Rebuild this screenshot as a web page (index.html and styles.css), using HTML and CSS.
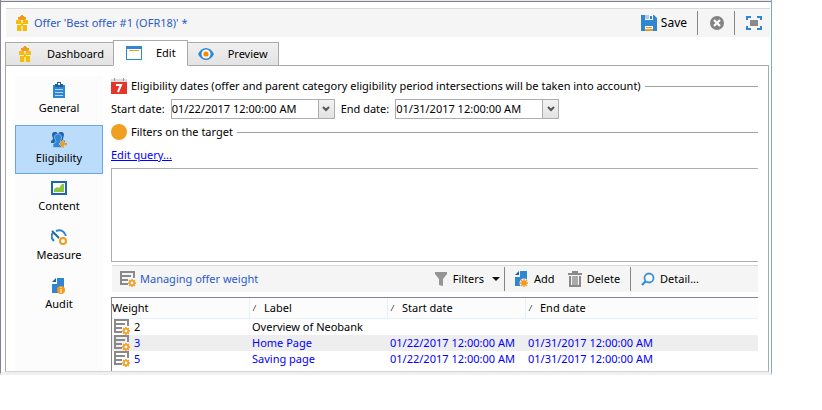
FILE: index.html
```html
<!DOCTYPE html>
<html lang="en">
<head>
<meta charset="utf-8">
<title>Offer 'Best offer #1 (OFR18)'</title>
<link rel="stylesheet" href="styles.css">
</head>
<body>
<svg class="defs" aria-hidden="true">
  <symbol id="gift" viewBox="0 0 16 16">
    <path fill="#f29a1c" d="M4 4V2h2V1h1V0h2v1h1v1h2v2l-1 1H5z"/>
    <path fill="#f2bd0c" d="M2 5h5v4H2zM9 5h5v4H9zM3 10h4v6H3zM9 10h4v6H9z"/>
    <path fill="#f9e08a" d="M7 6h2v3H7zM7 10h2v6H7z"/>
    <path fill="#f2bd0c" d="M7 8h2v3H7z"/>
  </symbol>
  <symbol id="gear" viewBox="0 0 16 16">
    <path stroke="#f29a1c" stroke-width="3" d="M8 0v16M0 8h16M2.300 2.300l11.400 11.400M13.700 2.300L2.300 13.700"/>
    <circle cx="8" cy="8" r="4.200" fill="#fff" stroke="#f29a1c" stroke-width="2.600"/>
  </symbol>
  <symbol id="listgear" viewBox="0 0 16 16">
    <path fill="none" stroke="#8a8a8a" stroke-width="2" d="M8 13H1V1h13v6"/>
    <path stroke="#8a8a8a" stroke-width="2" d="M1 5h10M1 9h7"/>
    <use href="#gear" x="8" y="8" width="8" height="8"/>
  </symbol>
  <symbol id="sort" viewBox="0 0 6 6">
    <path d="M1 6l3-6" stroke="#666"/>
  </symbol>
</svg>
<div class="window">
  <header class="bar title-bar">
    <svg class="icon"><use href="#gift"/></svg>
    <h1 class="caption">Offer 'Best offer #1 (OFR18)' *</h1>
    <button class="tool" type="button">
      <svg class="icon" viewBox="0 0 16 16"><path fill="#2f86d2" d="M0 0h13l3 3v13h-4v-5H4v5H0z"/><path fill="#fff" d="M4 0h8v5H4z"/><path fill="#a9cdec" d="M4 0h4v4H4z"/><path fill="#2f86d2" d="M9 1h2v3H9z"/><path fill="#fff" d="M4 11h8v5H4z"/><path fill="#f29a1c" d="M5 12h6v1H5zM4 14h8v2H4z"/></svg>
      <span>Save</span>
    </button>
    <button class="tool framed" type="button" aria-label="Cancel">
      <svg class="icon" viewBox="0 0 16 16"><circle cx="8" cy="8" r="7" fill="#848484"/><path d="M5 5l6 6M11 5l-6 6" stroke="#fff" stroke-width="2.2"/></svg>
    </button>
    <button class="tool" type="button" aria-label="Full screen">
      <svg class="icon" viewBox="0 0 16 16"><path d="M5 2H1v3M11 2h4v3M1 11v3h4M15 11v3h-4" fill="none" stroke="#2f86d2" stroke-width="2"/><path fill="#8a8a8a" d="M4 5h8v6H4z"/></svg>
    </button>
  </header>

  <nav class="tabs">
    <button class="tab" type="button"><svg class="icon"><use href="#gift"/></svg>Dashboard</button>
    <button class="tab current" type="button"><svg class="icon" viewBox="0 0 16 16"><path fill="#2f86d2" d="M0 1h16v14H0z"/><path fill="#fff" d="M1 4h14v10H1z"/><path fill="#f29a1c" d="M3 5h10v1H3z"/></svg>Edit</button>
    <button class="tab" type="button"><svg class="icon" viewBox="0 0 16 16"><path fill="#2f86d2" d="M0 8C2 4 5 2 8 2s6 2 8 6c-2 4-5 6-8 6S2 12 0 8z"/><circle cx="8" cy="8" r="4.500" fill="#fff"/><circle cx="8" cy="8" r="2.600" fill="#f08c00"/></svg>Preview</button>
  </nav>

  <div class="panel">
    <nav class="side">
      <button class="side-item" type="button"><svg class="icon" viewBox="0 0 16 16"><path fill="#2f86d2" d="M2 3h12v13H2z"/><path fill="#1f5f9f" d="M4 2h2V0h4v2h2v3H4z"/><path fill="#fff" d="M7 1h2v2H7z"/><path stroke="#b5d6f2" d="M4 7.500h8M4 10.500h8M4 13.500h8"/></svg>General</button>
      <button class="side-item current" type="button"><svg class="icon" viewBox="0 0 16 16"><path fill="#1f66ad" d="M1 3c0-4 5-4 6-1v6l-2 3H0V9l2-2zM13 3c0-4-5-4-6-1v6l2 3h5V9l-2-2z"/><path fill="#2f86d2" stroke="#bcdcfb" stroke-width=".6" d="M3.500 5c0-4 7-4 7 0 0 3-1 3-1 5l3 2v3.500H2V12l3-2C5 8 3.500 8 3.500 5z"/><path fill="#f29a1c" stroke="#bcdcfb" stroke-width=".6" d="M8 12l5-5v3.500h3.500v3H13V17z"/></svg>Eligibility</button>
      <button class="side-item" type="button"><svg class="icon" viewBox="0 0 16 16"><path fill="#fff" stroke="#1f66ad" stroke-width="2" d="M1 2h14v12H1z"/><path fill="#8cc63e" d="M3 12V9l3-2 2 1 3-4h2v8z"/></svg>Content</button>
      <button class="side-item" type="button"><svg class="icon" viewBox="0 0 16 16"><path fill="none" stroke="#2f86d2" stroke-width="2" d="M3 12C0 9 0 6 2 4M5 2c5-2 8 0 10 5"/><path stroke="#1f66ad" stroke-width="2" d="M1 2l7 7"/><circle cx="12" cy="12" r="3" fill="#fff" stroke="#f29a1c" stroke-width="2"/></svg>Measure</button>
      <button class="side-item" type="button"><svg class="icon" viewBox="0 0 16 16"><path fill="#2f86d2" d="M6 0h7v15H1V6h5z"/><path fill="#1f5f9f" d="M1 4l4-4v4z"/><circle cx="10" cy="12" r="4" fill="#f29a1c"/><path fill="#fff" d="M9.500 9h1v1h-1zM9.500 11h1v4h-1z"/></svg>Audit</button>
    </nav>

    <main class="content">
      <h2 class="section">
        <svg class="icon" viewBox="0 0 16 16"><path fill="#ddd" d="M0 1h16v4H0z"/><path fill="#999" d="M3 0h1v3H3zM12 0h1v3h-1z"/><path fill="#e2352c" d="M0 4h16v12H0z"/><path fill="none" stroke="#fff" stroke-width="2" d="M5 7h5l-3 7"/></svg>
        Eligibility dates (offer and parent category eligibility period intersections will be taken into account)
      </h2>
      <div class="dates">
        <label for="start">Start date:</label>
        <span class="combo"><input id="start" value="01/22/2017 12:00:00 AM"><button type="button" aria-label="Pick start date"><svg viewBox="0 0 8 8"><path d="M1 2l3 3 3-3" fill="none" stroke="#555" stroke-width="2"/></svg></button></span>
        <label for="end">End date:</label>
        <span class="combo"><input id="end" value="01/31/2017 12:00:00 AM"><button type="button" aria-label="Pick end date"><svg viewBox="0 0 8 8"><path d="M1 2l3 3 3-3" fill="none" stroke="#555" stroke-width="2"/></svg></button></span>
      </div>
      <h2 class="section">
        <svg class="icon" viewBox="0 0 16 16"><circle cx="8" cy="8" r="8" fill="#f0a020"/></svg>
        Filters on the target
      </h2>
      <a class="query-link" href="#">Edit query...</a>
      <textarea class="query" aria-label="Query" readonly></textarea>

      <div class="bar list-bar">
        <svg class="icon"><use href="#listgear"/></svg>
        <h2 class="caption">Managing offer weight</h2>
        <button class="tool" type="button">
          <svg class="icon" viewBox="0 0 16 16"><path fill="#959595" d="M2 1h12v2l-4 5v7l-4-1V8L2 3z"/></svg><span>Filters</span>
          <svg class="arrow" viewBox="0 0 8 4"><path d="M0 0h8L4 4z" fill="#111"/></svg>
        </button>
        <button class="tool first" type="button">
          <svg class="icon" viewBox="0 0 16 16"><path fill="#2f86d2" d="M6 0h7v15H1V6h5z"/><path fill="#1f5f9f" d="M1 4l4-4v4z"/><circle cx="10" cy="12" r="4.500" fill="#f5f5f5"/><circle cx="10" cy="12" r="2.600" fill="#f29a1c"/><path stroke="#f29a1c" stroke-width="1.300" d="M10 8v8M6 12h8M7 9l6 6M13 9l-6 6"/></svg><span>Add</span>
        </button>
        <button class="tool" type="button">
          <svg class="icon" viewBox="0 0 16 16"><path fill="none" stroke="#8a8a8a" stroke-width="2" d="M1 3h14M6 3V1h4v2M3 5v10h10V5"/><path stroke="#8a8a8a" stroke-width="1.400" d="M6 5v9M8 5v9M10 5v9"/></svg><span>Delete</span>
        </button>
        <button class="tool last" type="button">
          <svg class="icon" viewBox="0 0 16 16"><circle cx="9" cy="7" r="4.500" fill="#fff" stroke="#3b8fd8" stroke-width="1.800"/><path d="M6 10l-4 4" stroke="#3b8fd8" stroke-width="2.400"/></svg><span>Detail...</span>
        </button>
      </div>

      <div class="list">
        <table>
          <thead>
            <tr><th>Weight</th><th><svg class="sort"><use href="#sort"/></svg>Label</th><th><svg class="sort"><use href="#sort"/></svg>Start date</th><th><svg class="sort"><use href="#sort"/></svg>End date</th></tr>
          </thead>
          <tbody>
            <tr><td><span class="weight"><svg class="icon"><use href="#listgear"/></svg>2</span></td><td>Overview of Neobank</td><td></td><td></td></tr>
            <tr class="link shaded"><td><span class="weight"><svg class="icon"><use href="#listgear"/></svg>3</span></td><td>Home Page</td><td>01/22/2017 12:00:00 AM</td><td>01/31/2017 12:00:00 AM</td></tr>
            <tr class="link"><td><span class="weight"><svg class="icon"><use href="#listgear"/></svg>5</span></td><td>Saving page</td><td>01/22/2017 12:00:00 AM</td><td>01/31/2017 12:00:00 AM</td></tr>
          </tbody>
        </table>
      </div>
    </main>
  </div>
</div>
</body>
</html>
```

FILE: styles.css
```css
* { box-sizing: border-box; }

body {
  margin: 0;
  background: #fff;
  color: #000;
  font: 11px/16px "Noto Sans", "Open Sans", sans-serif;
}

button, input, textarea {
  margin: 0;
  padding: 0;
  border: 0;
  background: none;
  color: inherit;
  font: inherit;
}

h1, h2 { margin: 0; font: inherit; }

.defs { position: absolute; width: 0; height: 0; }

.icon { display: block; flex: none; width: 16px; height: 16px; }

.window {
  display: flex;
  flex-direction: column;
  margin-right: 50px;
  border-left: 1px solid #838391;
  border-right: 1px solid #7aa7cc;
  border-bottom: 3px solid #f0f0f0;
}

.window::before {
  content: "";
  height: 1px;
  background: #e8e8e8;
  border-bottom: 1px solid #7f7f8b;
}

.bar {
  display: flex;
  align-items: center;
  background: #f5f5f5;
  border-top: 1px solid #d9d9d9;
  white-space: nowrap;
}

.title-bar { height: 29px; margin: 6px 1px 0 5px; padding: 0 8px; }

.caption { flex: 1; margin-left: 4px; color: #2a5bc8; }

.title-bar .caption, .title-bar .tool { font-size: 12px; }

.title-bar .caption { font-size: 11px; }

.tool {
  display: flex;
  align-items: center;
  gap: 4px;
  height: 24px;
}

.framed {
  margin: 0 11px 0 10px;
  padding: 0 9px 0 11px;
  border: solid #858585;
  border-width: 0 1px;
}

.tabs {
  display: flex;
  align-items: flex-end;
  height: 26px;
  margin: 3px 0 0 4px;
  position: relative;
}

.tab {
  display: flex;
  align-items: center;
  gap: 14px;
  height: 24px;
  padding: 0 9px 0 11px;
  border: 1px solid #a9a9a9;
  background: linear-gradient(#f0f0f0, #e3e3e3);
}

.tab + .tab { margin-left: -1px; padding: 0 10px; }

.tab.current {
  height: 26px;
  padding: 0 11px 0 12px;
  border-bottom-color: #fff;
  background: #fff;
  z-index: 1;
}

.panel {
  display: flex;
  gap: 8px;
  margin: -1px 2px 0 4px;
  padding: 10px 10px 0 9px;
  border: 1px solid #a9a9a9;
  border-bottom-color: #d4d4d4;
}

.side { flex: none; width: 88px; background: #fcfcfc; }

.side-item {
  display: flex;
  flex-direction: column;
  align-items: center;
  gap: 2px;
  width: 100%;
  height: 49px;
  padding-top: 6px;
}

.side-item.current { border: 1px solid #66a7e8; background: #bcdcfb; }

.content { flex: 1; min-width: 0; padding-top: 2px; }

.section {
  display: flex;
  align-items: center;
  gap: 4px;
  white-space: nowrap;
}

.section::after { content: ""; flex: 1; height: 1px; background: #a0a0a0; }

.dates { display: flex; align-items: center; gap: 6px; margin: 5px 0; }

.combo {
  display: flex;
  width: 164px;
  height: 20px;
  border: 1px solid #abadb3;
}

.combo input { flex: 1; min-width: 0; }

.combo button {
  display: grid;
  place-items: center;
  width: 16px;
  border-left: 1px solid #abadb3;
  background: linear-gradient(#f2f2f2, #e2e2e2);
}

.combo svg { width: 8px; height: 8px; }

.query-link { display: block; margin: 7px 0 5px; color: #00f; }

.query {
  display: block;
  width: 100%;
  height: 94px;
  border: 1px solid #abadb3;
  border-right: 0;
  resize: none;
}

.list-bar { height: 27px; margin: 3px 0 5px 1px; padding: 0 59px 0 8px; }

.arrow { width: 8px; height: 4px; margin-left: 4px; }

.first { margin: 0 12px 0 4px; padding-left: 9px; border-left: 1px solid #858585; }

.last { margin-left: 10px; padding-left: 9px; border-left: 1px solid #858585; }

.list { height: 74px; border: solid #838391; border-width: 1px 0 0 1px; }

table { width: 100%; border-collapse: separate; border-spacing: 0; table-layout: fixed; }

th, td { padding: 0; text-align: left; font-weight: 400; white-space: nowrap; }

th { width: 138px; height: 21px; background: #fcfcfc; border-bottom: 1px solid #e5f1fb; }

th:first-child { width: 137px; }

th:last-child { width: auto; }

th + th { padding-left: 2px; border-left: 1px solid #e5f1fb; }

td { height: 16px; }

td + td { padding-left: 3px; }

.sort { width: 6px; height: 6px; margin-right: 6px; vertical-align: 1px; }

.weight { display: flex; align-items: center; gap: 4px; padding-left: 2px; }

.link { color: #00f; }

.shaded { background: #eee; }
```
